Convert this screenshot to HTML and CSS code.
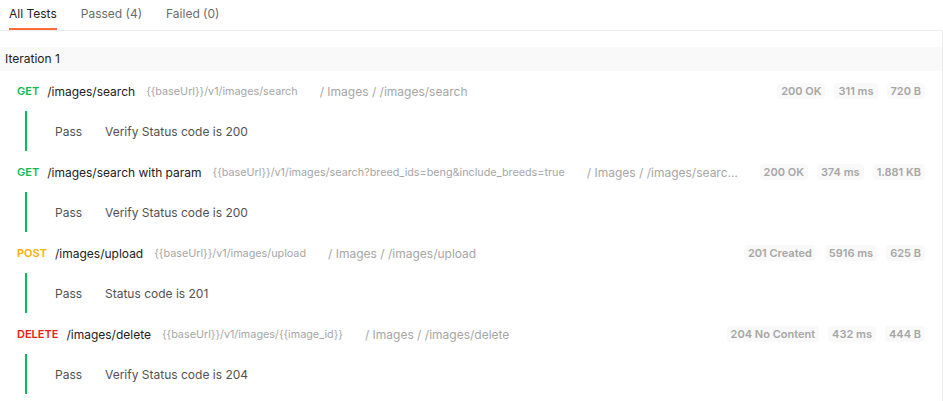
FILE: index.html
```html
<!DOCTYPE html>
<html>
<head>
<meta charset="utf-8">
<link rel="stylesheet" href="styles.css">
</head>
<body>
<div class="tabs">
  <div class="tab active">All Tests</div>
  <div class="tab">Passed (4)</div>
  <div class="tab">Failed (0)</div>
</div>
<div class="results">
  <div class="iter-head">Iteration 1</div>
  <div class="list">
    <div class="req">
      <span class="method get">GET</span>
      <span class="path">/images/search</span>
      <span class="url">{{baseUrl}}/v1/images/search</span>
      <span class="crumb">/ Images / /images/search</span>
      <span class="badges"><span class="badge">200 OK</span><span class="badge">311 ms</span><span class="badge">720 B</span></span>
    </div>
    <div class="test"><span class="res">Pass</span><span class="name">Verify Status code is 200</span></div>

    <div class="req">
      <span class="method get">GET</span>
      <span class="path">/images/search with param</span>
      <span class="url">{{baseUrl}}/v1/images/search?breed_ids=beng&amp;include_breeds=true</span>
      <span class="crumb">/ Images / /images/search with param</span>
      <span class="badges"><span class="badge">200 OK</span><span class="badge">374 ms</span><span class="badge">1.881 KB</span></span>
    </div>
    <div class="test"><span class="res">Pass</span><span class="name">Verify Status code is 200</span></div>

    <div class="req">
      <span class="method post">POST</span>
      <span class="path">/images/upload</span>
      <span class="url">{{baseUrl}}/v1/images/upload</span>
      <span class="crumb">/ Images / /images/upload</span>
      <span class="badges"><span class="badge">201 Created</span><span class="badge">5916 ms</span><span class="badge">625 B</span></span>
    </div>
    <div class="test"><span class="res">Pass</span><span class="name">Status code is 201</span></div>

    <div class="req">
      <span class="method delete">DELETE</span>
      <span class="path">/images/delete</span>
      <span class="url">{{baseUrl}}/v1/images/{{image_id}}</span>
      <span class="crumb">/ Images / /images/delete</span>
      <span class="badges"><span class="badge">204 No Content</span><span class="badge">432 ms</span><span class="badge">444 B</span></span>
    </div>
    <div class="test"><span class="res">Pass</span><span class="name">Verify Status code is 204</span></div>
  </div>
</div>
</body>
</html>
```
FILE: styles.css
```css
* { box-sizing: border-box; }
html, body { margin: 0; background: #fff; }
body {
  font-family: Inter, "Noto Sans", "Liberation Sans", sans-serif;
  color: #212121;
  width: 943px;
  height: 401px;
  overflow: hidden;
}
.tabs {
  display: flex;
  gap: 24px;
  height: 31px;
  padding-left: 9px;
  border-bottom: 1px solid #ededed;
}
.tab {
  font-size: 12px;
  line-height: 28px;
  height: 30px;
  color: #6b6b6b;
  border-bottom: 2px solid transparent;
}
.tab.active {
  color: #212121;
  border-bottom-color: #ff6c37;
}
.results {
  border-right: 1px solid #ededed;
  padding-top: 16px;
  height: 370px;
}
.iter-head {
  height: 24px;
  line-height: 24px;
  background: #f9f9f9;
  padding-left: 5px;
  font-size: 12px;
  color: #212121;
}
.list { padding-top: 6px; }
.req {
  display: flex;
  align-items: center;
  height: 28px;
  padding: 0 17px;
  white-space: nowrap;
}
.method {
  font-size: 11px;
  font-weight: 600;
  margin-right: 8px;
}
.get { color: #0cbb52; }
.post { color: #ffad00; }
.delete { color: #eb2013; }
.path { font-size: 12px; color: #212121; margin-right: 11px; }
.url { font-size: 10.8px; color: #a6a6a6; margin-right: 22px; }
.crumb {
  font-size: 12px;
  color: #a6a6a6;
  overflow: hidden;
  text-overflow: ellipsis;
  flex: 0 1 auto;
  min-width: 0;
  margin-right: 20px;
}
.badges { margin-left: auto; display: flex; gap: 9px; flex-shrink: 0; }
.badge {
  font-size: 11px;
  font-weight: 600;
  color: #a6a6a6;
  background: #f9f9f9;
  border-radius: 4px;
  height: 16px;
  line-height: 16px;
  padding: 0 4px;
}
.test {
  display: flex;
  align-items: center;
  height: 40px;
  margin: 6px 0 7px 25px;
  border-left: 2px solid #0cbb52;
  padding-left: 28px;
  font-size: 12px;
  color: #525252;
}
.res { width: 50px; }
```
